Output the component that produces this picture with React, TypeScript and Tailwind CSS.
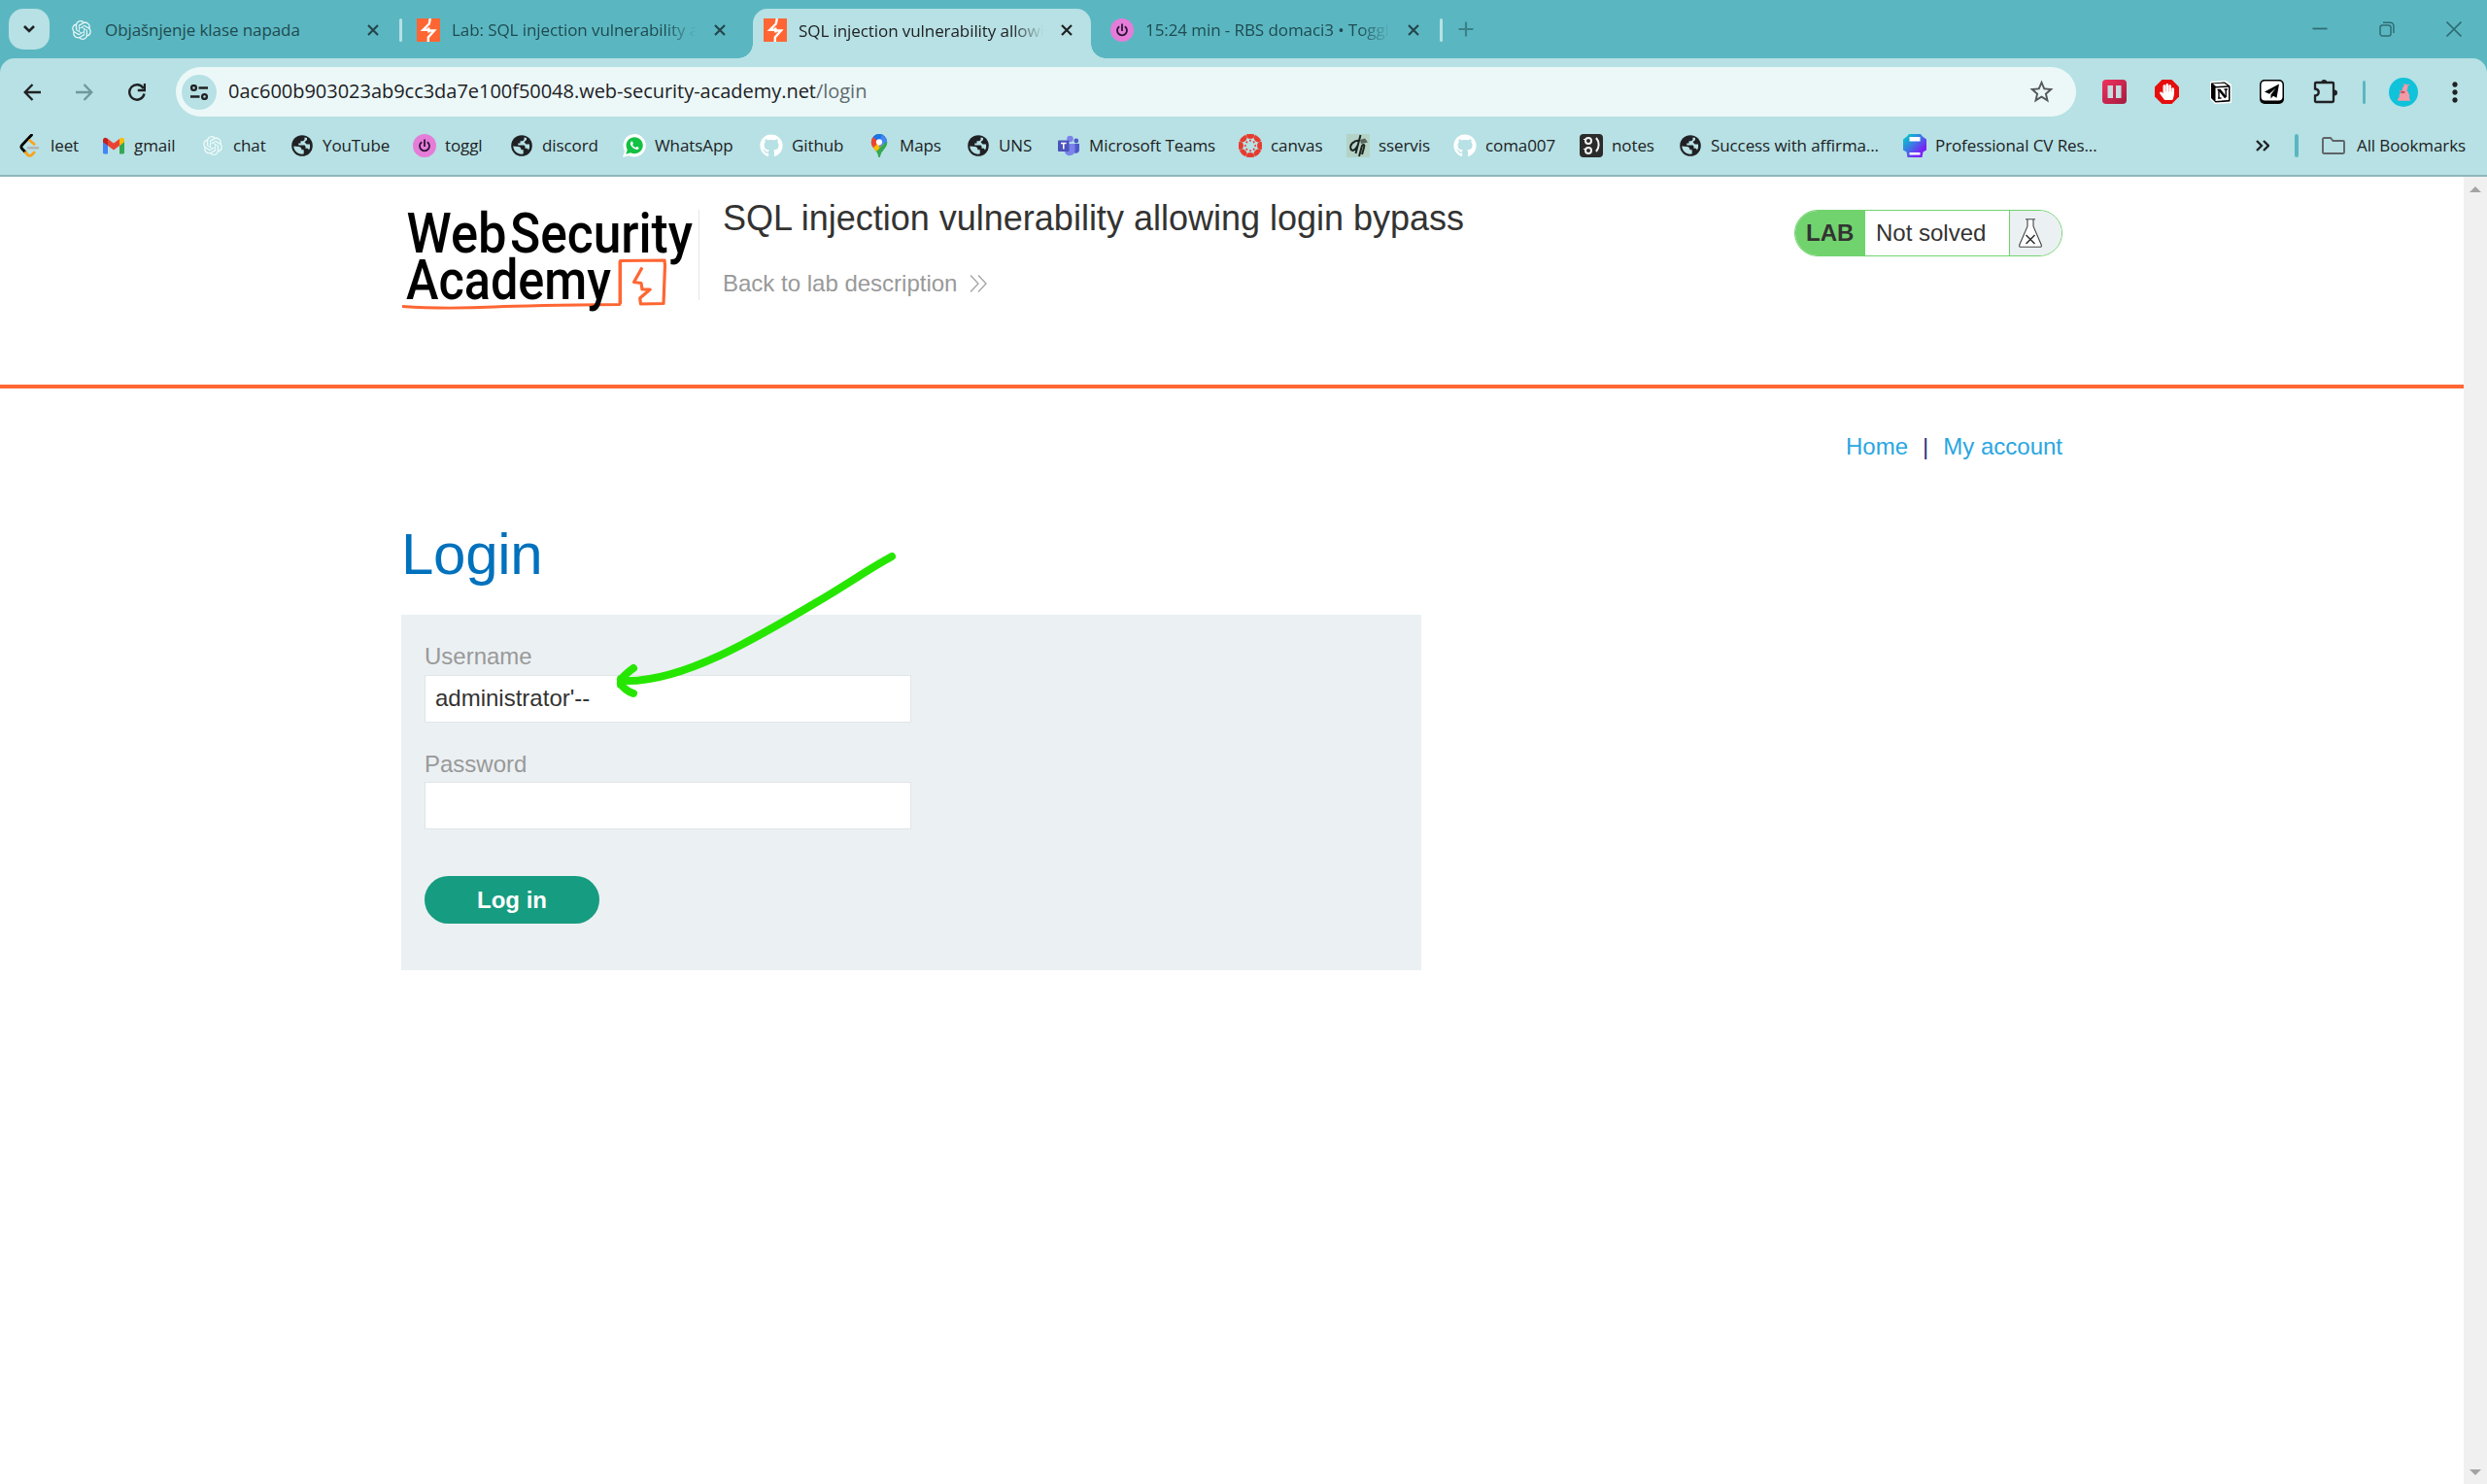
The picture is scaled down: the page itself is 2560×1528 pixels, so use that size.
import type { ReactNode } from "react";
import { MdStarBorder, MdMoreVert } from "react-icons/md";
import { RiOpenaiFill } from "react-icons/ri";
import { FaGithub, FaHandPaper } from "react-icons/fa";
import { IoLogoWhatsapp } from "react-icons/io";

const BurpIcon = () => (
  <svg viewBox="0 0 24 24" className="size-6 shrink-0">
    <rect width="24" height="24" fill="#ff6633" />
    <path d="M13.800 0 12.800 5.500 6.500 11.800H12.300V14.500M12.300 9.500V12.500H18L11.800 19.500V24" fill="none" stroke="#fff" strokeWidth="2.400" />
  </svg>
);

const TogglIcon = () => (
  <svg viewBox="0 0 24 24" className="size-6 shrink-0">
    <circle cx="12" cy="12" r="12" fill="#e57cd8" />
    <path d="M12 5.500v7.500M9.200 8.200a5 5 0 1 0 5.600 0" fill="none" stroke="#2c1338" strokeWidth="1.800" />
  </svg>
);

const LeetIcon = () => (
  <svg viewBox="0 0 24 24" className="size-6">
    <path d="M13.500 1 3.800 11.200c-1.200 1.300-1.200 2.700 0 4L7 18.500" fill="none" stroke="#000" strokeWidth="2.800" strokeLinecap="round" />
    <path d="m7.300 19 2.300 2.500c1.200 1.200 2.900 1.200 4.100 0l2.500-2.500M11.500 6.500l4.800 4" fill="none" stroke="#ffa116" strokeWidth="2.600" strokeLinecap="round" />
    <path d="M10 14.200h10" stroke="#b3b3b3" strokeWidth="2.400" strokeLinecap="round" />
  </svg>
);

const GmailIcon = () => (
  <svg viewBox="0 0 24 24" className="size-6">
    <path d="M1 5.500V19.300c0 .7.500 1.200 1.200 1.200H6V11.500Z" fill="#4285f4" />
    <path d="M23 5.500V19.300c0 .7-.5 1.200-1.200 1.200H18V11.500Z" fill="#34a853" />
    <path d="M18 5v7l5-3.800V6.300c0-2.400-2.300-3.300-4-2Z" fill="#fbbc04" />
    <path d="M6 12V5l6 4.500L18 5v7l-6 4.500Z" fill="#ea4335" />
    <path d="M1 6.300v1.900L6 12V5l-1-.7C3.300 3 1 3.900 1 6.300Z" fill="#c5221f" />
  </svg>
);

const MapsIcon = () => (
  <svg viewBox="0 0 24 24" className="size-6">
    <defs>
      <clipPath id="pin">
        <path d="M12 0a8.200 8.200 0 0 0-8.200 8.300c0 2.800 1.100 4.500 3 6.900 2.200 2.800 3.600 4.300 4.200 7.500.2 1.700 1.800 1.700 2 0 .6-3.200 2-4.700 4.200-7.500 1.900-2.400 3-4.100 3-6.900A8.200 8.200 0 0 0 12 0Z" />
      </clipPath>
    </defs>
    <g clipPath="url(#pin)">
      <path d="M0 0h24v24H0Z" fill="#34a853" />
      <path d="M0 6 12 8.300 17 10 7 20H0Z" fill="#fbbc04" />
      <path d="M0 0h6L12 8.300 5.500 14.500 0 9Z" fill="#ea4335" />
      <path d="M5 2.500 8 0h12l-8 8.300Z" fill="#1a73e8" />
      <path d="M15 0 22 6 12 14V8.300Z" fill="#4285f4" />
      <path d="M22 6.500 12 16v8h12Z" fill="#34a853" />
    </g>
    <circle cx="12" cy="8.300" r="3.100" fill="#fff" />
  </svg>
);

const TeamsIcon = () => (
  <svg viewBox="0 0 24 24" className="size-6">
    <circle cx="19.800" cy="7" r="2.400" fill="#5059c9" />
    <path d="M16 10h7v6.500a3.500 3.500 0 0 1-5 3Z" fill="#5059c9" />
    <circle cx="13.500" cy="5" r="3.300" fill="#7b83eb" />
    <path d="M8 10h10.500v7a5.400 5.400 0 0 1-10.500 1.500Z" fill="#7b83eb" />
    <rect x="1" y="6.500" width="11.500" height="11.500" rx="1" fill="#4b53bc" />
    <path d="M4 9.500h5.600M6.800 9.500v6" stroke="#fff" strokeWidth="1.500" />
  </svg>
);

const CanvasIcon = () => (
  <svg viewBox="0 0 24 24" className="size-6" fill="#e63b2e">
    {[0, 45, 90, 135, 180, 225, 270, 315].map((a) => (
      <g key={a} transform={`rotate(${a} 12 12)`}>
        <path d="M8 .7a12 12 0 0 1 8 0 4 4 0 0 1-8 0Z" stroke="#e63b2e" strokeWidth="0.600" />
        <circle cx="12" cy="6.800" r="1" />
      </g>
    ))}
  </svg>
);

const ServisIcon = () => (
  <svg viewBox="0 0 24 24" className="size-6">
    <rect width="24" height="24" fill="#b4d3c6" />
    <path d="M13 6.500C7 7 3 11 4.500 15.500c1.500 3 5 1 7.500-4.500M9.500 20 14.500 1M13 23l3-11c2-2 3-1 2 2l-2 7" fill="none" stroke="#1c241f" strokeWidth="2" />
    <path d="m14 6 5-1.500 3 4-7 1.500Z" fill="#59635d" />
  </svg>
);

const NotesIcon = () => (
  <svg viewBox="0 0 24 24" className="size-6">
    <rect width="24" height="24" rx="4" fill="#2b2b2b" />
    <g fill="none" stroke="#f3f3f3" strokeWidth="2">
      <circle cx="9" cy="7" r="3" />
      <circle cx="9" cy="17" r="3" />
      <path d="M17 4c3.500 4 3.500 10 0 14" />
      <path d="M4 5.500h3M4 15.500h3" strokeWidth="1.200" />
    </g>
  </svg>
);

const CvIcon = () => (
  <svg viewBox="0 0 24 24" className="size-6">
    <defs>
      <linearGradient id="cv" x1="0" y1="0" x2="1" y2="1">
        <stop offset="0.100" stopColor="#05c3c9" />
        <stop offset="0.450" stopColor="#3f74e6" />
        <stop offset="0.750" stopColor="#7a22f5" />
      </linearGradient>
    </defs>
    <path d="M6 0h12l2 2.500 4 3v11l-3.500 2-1 5.500H4.500l-1-5.500-3.500-2v-11l4-3Z" fill="url(#cv)" />
    <rect x="6.500" y="3" width="11" height="4.500" fill="#fff" />
    <rect x="6.500" y="19" width="11" height="2.500" fill="#fff" />
  </svg>
);

const WhatsIcon = () => (
  <svg viewBox="0 0 24 24" className="size-6">
    <path d="M12.200 0A11.800 11.800 0 0 0 2 17.700L0 24l6.400-1.800A11.800 11.800 0 1 0 12.200 0Z" fill="#fff" />
    <IoLogoWhatsapp x="2" y="2" size={20} color="#13c143" />
  </svg>
);

const Globe = () => (
  <svg viewBox="0 0 24 24" className="size-6 shrink-0">
    <circle cx="12" cy="12" r="10.800" fill="#202124" />
    <path d="M3.300 12.500 8.500 13c1.800.2 3 1.500 3 3.200h2.200v4.300C8 21.500 3.500 17.500 3.300 12.500Z" fill="#b7e1e4" />
    <path d="M14.500 3.500v1.800c0 1-.8 1.900-2 1.900H10.500v2.200H8.300v2.200h5.500c1 0 1.700.7 1.700 1.700v1.500h2.200l1.300 1.800a8.600 8.600 0 0 0 1-6.100h-3.500l-2-2.200 2.500-2.300V3.900a8.400 8.400 0 0 0-2.500-.4Z" fill="#b7e1e4" />
  </svg>
);
const Gpt = () => <RiOpenaiFill className="size-6 text-[#eefafa]" />;
const Git = () => <FaGithub className="size-6 text-white" />;

const bookmarks: { w: string; icon: ReactNode; label: string }[] = [
  { w: "w-[86px]", icon: <LeetIcon />, label: "leet" },
  { w: "w-[102px]", icon: <GmailIcon />, label: "gmail" },
  { w: "w-[92px]", icon: <Gpt />, label: "chat" },
  { w: "w-[126px]", icon: <Globe />, label: "YouTube" },
  { w: "w-[100px]", icon: <TogglIcon />, label: "toggl" },
  { w: "w-[116px]", icon: <Globe />, label: "discord" },
  { w: "w-[141px]", icon: <WhatsIcon />, label: "WhatsApp" },
  { w: "w-[111px]", icon: <Git />, label: "Github" },
  { w: "w-[102px]", icon: <MapsIcon />, label: "Maps" },
  { w: "w-[93px]", icon: <Globe />, label: "UNS" },
  { w: "w-[187px]", icon: <TeamsIcon />, label: "Microsoft Teams" },
  { w: "w-[111px]", icon: <CanvasIcon />, label: "canvas" },
  { w: "w-[110px]", icon: <ServisIcon />, label: "sservis" },
  { w: "w-[130px]", icon: <Git />, label: "coma007" },
  { w: "w-[102px]", icon: <NotesIcon />, label: "notes" },
  { w: "w-[231px]", icon: <Globe />, label: "Success with affirma..." },
  { w: "w-[220px]", icon: <CvIcon />, label: "Professional CV Res..." },
];

const Cross = ({ c = "#24464b" }: { c?: string }) => (
  <svg viewBox="0 0 12 12" className="size-3 shrink-0">
    <path d="m1 1 10 10M11 1 1 11" stroke={c} strokeWidth="2.200" />
  </svg>
);

const Fade = ({ children, className }: { children: ReactNode; className: string }) => (
  <span className={`block overflow-hidden whitespace-nowrap pt-px ${className}`}>{children}</span>
);

const mask = "[mask-image:linear-gradient(to_right,#000_calc(100%-32px),transparent)]";

function TabStrip() {
  return (
    <div className="flex h-[60px] shrink-0 bg-[#5ab7c1] text-[17px] leading-6 tracking-[-0.08px] text-[#1f4a50]">
      <div className="ml-[9px] mt-[9px] flex size-[42px] items-center justify-center rounded-[15px] bg-[#b7e1e4]">
        <svg viewBox="0 0 14 10" className="h-[10px] w-[14px]">
          <path d="m2 2 5 5 5-5" fill="none" stroke="#202124" strokeWidth="2.600" />
        </svg>
      </div>
      <div className="flex h-[61px] w-[360px] items-center pl-[21px]">
        <RiOpenaiFill className="size-6 text-[#e4f6f7]" />
        <Fade className="ml-3 w-[270px]">Objašnjenje klase napada</Fade>
        <Cross />
      </div>
      <div className="mt-[19px] h-6 w-[3px] rounded-full bg-[#b7e1e4]" />
      <div className="flex h-[61px] w-[346px] items-center pl-[15px]">
        <BurpIcon />
        <Fade className={`ml-3 mr-[18px] w-[252px] ${mask}`}>Lab: SQL injection vulnerability allowing</Fade>
        <Cross />
      </div>
      <div className="flex w-[378px] items-end">
        <div className="size-[15px] bg-[radial-gradient(circle_at_0_0,transparent_14.500px,#b7e1e4_15px)]" />
        <div className="flex h-[51px] w-[348px] items-center rounded-t-[15px] bg-[#b7e1e4] pb-[7px] pl-[11px] text-[#202124]">
          <BurpIcon />
          <Fade className={`ml-3 mr-[18px] w-[252px] ${mask}`}>SQL injection vulnerability allowing</Fade>
          <Cross c="#202124" />
        </div>
        <div className="size-[15px] bg-[radial-gradient(circle_at_100%_0,transparent_14.500px,#b7e1e4_15px)]" />
      </div>
      <div className="flex h-[61px] w-[344px] items-center pl-[5px]">
        <TogglIcon />
        <Fade className={`ml-3 mr-[18px] w-[252px] ${mask}`}>15:24 min - RBS domaci3 • Toggl Track</Fade>
        <Cross />
      </div>
      <div className="mt-[19px] h-6 w-[3px] rounded-full bg-[#b7e1e4]" />
      <svg viewBox="0 0 16 16" className="ml-4 mt-[22px] size-4">
        <path d="M8 .5v15M.5 8h15" stroke="#3b8188" strokeWidth="2.200" />
      </svg>
      <div className="ml-auto mr-[26px] flex h-[60px] items-center text-[#2f6d74]">
        <svg viewBox="0 0 16 16" className="size-4">
          <path d="M.5 7.500h15" stroke="currentColor" strokeWidth="1.800" />
        </svg>
        <svg viewBox="0 0 16 16" className="ml-[53px] size-4" fill="none" stroke="currentColor" strokeWidth="1.500">
          <rect x="1" y="4" width="11" height="11" rx="2.300" />
          <path d="M4 1.200h7.500a3.400 3.400 0 0 1 3.400 3.400V12" />
        </svg>
        <svg viewBox="0 0 16 16" className="ml-[53px] size-4">
          <path d="m.5.5 15 15M15.500.5l-15 15" stroke="currentColor" strokeWidth="1.600" />
        </svg>
      </div>
    </div>
  );
}

function Toolbar() {
  return (
    <div className="flex h-[69px] items-center">
      <svg viewBox="0 0 18 18" className="ml-6 size-[18px]" fill="none" stroke="#202124" strokeWidth="2.300">
        <path d="M18 9H2M9.500 1 1.700 9l7.800 8" />
      </svg>
      <svg viewBox="0 0 18 18" className="ml-9 size-[18px]" fill="none" stroke="#6f979b" strokeWidth="2.300">
        <path d="M0 9h16M8.500 1l7.800 8-7.800 8" />
      </svg>
      <svg viewBox="0 0 18 18" className="ml-9 size-[18px]" fill="none" stroke="#202124" strokeWidth="2.400">
        <path d="M15.700 5.200A7.700 7.700 0 1 0 16.500 10.500" />
        <path d="M17 0v7h-7.200" />
      </svg>
      <div className="ml-[31px] flex h-[51px] w-[1956px] items-center rounded-full bg-[#ecf8f8] pl-1.5 pr-[21px]">
        <div className="flex size-9 items-center justify-center rounded-full bg-[#b7e1e4]">
          <svg viewBox="0 0 20 16" className="h-4 w-5" fill="none" stroke="#202124" strokeWidth="2.300">
            <circle cx="4.500" cy="3.500" r="2.400" />
            <path d="M9.500 3.500H19M1 12.500h9.500" />
            <circle cx="15.500" cy="12.500" r="2.400" />
          </svg>
        </div>
        <span className="ml-3 pb-px text-[20px] leading-6 tracking-[-0.03px] text-[#202124]">
          0ac600b903023ab9cc3da7e100f50048.web-security-academy.net<span className="text-[#5f6b6d]">/login</span>
        </span>
        <MdStarBorder className="ml-auto size-[29px] text-[#55595b]" />
      </div>
      <svg viewBox="0 0 25 25" className="ml-[27px] size-[25px]">
        <defs>
          <linearGradient id="pk" x1="0" y1="0" x2="1" y2="1">
            <stop stopColor="#f0325f" />
            <stop offset="1" stopColor="#a31b40" />
          </linearGradient>
        </defs>
        <rect width="25" height="25" rx="4" fill="url(#pk)" />
        <path d="M5.500 6H11v13H5.500ZM14 6h5.500v13H14Z" fill="#c3dde0" />
      </svg>
      <div className="ml-[29px] flex size-[25px] items-center justify-center bg-[#e60d0d] [clip-path:polygon(30%_0,70%_0,100%_30%,100%_70%,70%_100%,30%_100%,0_70%,0_30%)]">
        <FaHandPaper className="size-[17px] text-white" />
      </div>
      <svg viewBox="0 0 24 24" className="ml-[31px] size-6">
        <path d="M1 1 17 0l6 4v19L6 24l-5-5Z" fill="#fff" />
        <path d="M2 2.500 16 1.500l5.500 4v16L6.500 22.500 2 18Z" fill="#000" />
        <path d="M4 3.300 15.500 2.700l3.500 2.500L7 6ZM6.500 7.500l13.500-.8V20l-13.500 1Z" fill="#fff" />
        <path d="M8.500 9.500h3M15.500 9h3.500M9 18h3.500M10 9.500V18M17.200 9v8" stroke="#000" strokeWidth="1.400" />
        <path d="m10.500 9.500 6.500 8" stroke="#000" strokeWidth="2.600" />
      </svg>
      <svg viewBox="0 0 25 25" className="ml-[28px] size-[25px]">
        <rect width="25" height="25" rx="5" fill="#000" />
        <rect x="1.500" y="1.500" width="22" height="20" rx="4" fill="#fff" />
        <path d="M20 4.500 5 12.500l5 2.200 6.500-6-5 6.800v4l2.500-2.800 3.500 2Z" fill="#000" />
      </svg>
      <svg viewBox="0 0 25 25" className="ml-[30px] size-[25px]" fill="none" stroke="#202124" strokeWidth="2.300">
        <path d="M3.500 4H20c.6 0 1 .4 1 1v18c0 .6-.4 1-1 1H3c-.6 0-1-.4-1-1v-5.500c5-.5 5-6.500 0-7V5c0-.6.400-1 1-1Z" transform="translate(0 -1)" />
        <path d="M8.300 3a3 3 0 0 1 6 0ZM22 10.500a3 3 0 0 1 0 6Z" fill="#202124" stroke="none" />
      </svg>
      <div className="ml-[26px] h-6 w-[3px] rounded-full bg-[#5ab7c1]" />
      <svg viewBox="0 0 30 30" className="ml-[24px] size-[30px]">
        <circle cx="15" cy="15" r="15" fill="#10c2da" />
        <path d="M14 12.500c-.5-2.500 1-4 2.500-4.500L14 6.800c2.500-.4 4-.2 5.500.4l3-.9-3.300 2.700c.8 1.700 0 3.200-1 4 2.300 2 3.500 5 2.800 8l1.200 2.700H10c-2-.7-.5-2.700.8-3.500-.6-2.200.3-4 1.700-5l-2.200-1.500Z" fill="#f59aa4" />
        <path d="m11.500 13.500 4.500.5 1 1.600-3.500.7" fill="#c64a5e" />
      </svg>
      <MdMoreVert className="ml-[22px] size-8 text-[#202124]" />
    </div>
  );
}

function BookmarkBar() {
  return (
    <div className="flex h-[42px] items-center pl-[19px] text-[17px] leading-6 tracking-[-0.1px] text-[#202124]">
      {bookmarks.map((b, i) => (
        <div key={i} className={`flex shrink-0 items-center gap-[9px] whitespace-nowrap ${b.w}`}>
          {b.icon}
          <span>{b.label}</span>
        </div>
      ))}
      <svg viewBox="0 0 14 12" className="ml-[143px] h-3 w-[14px]" fill="none" stroke="#202124" strokeWidth="2.300">
        <path d="m1 1 5 5-5 5M8 1l5 5-5 5" />
      </svg>
      <div className="ml-[26px] h-6 w-1 rounded-full bg-[#5ab7c1]" />
      <svg viewBox="0 0 24 18" className="ml-6 h-[18px] w-6" fill="none" stroke="#5f6368" strokeWidth="1.900">
        <path d="M1 2.200C1 1.500 1.500 1 2.200 1H9l2.500 3h10.300c.7 0 1.200.5 1.200 1.200v10.600c0 .7-.5 1.200-1.200 1.200H2.200C1.500 17 1 16.500 1 15.800Z" />
      </svg>
      <span className="ml-3 whitespace-nowrap">All Bookmarks</span>
    </div>
  );
}

const Logo = () => (
  <svg viewBox="0 0 325 120" className="h-[120px] w-[325px]">
    <path d="M9 110.500c30 2 60 2 95 .5s80-2 129-2.500V64" fill="none" stroke="#ff6633" strokeWidth="2.800" strokeLinejoin="round" />
    <path d="M233.500 108V63.500l45.500-.5.500 5-1.500 39.500-23.500.5-.8-6 10.500-9H256l-1-6.500-7.500-1 8.500-15" fill="none" stroke="#ff6633" strokeWidth="3.200" strokeLinejoin="round" />
    <g fontFamily="Roboto, sans-serif" fontWeight="500" fontSize="57" fill="#000">
      <text x="13.500" y="54.500" textLength="103" lengthAdjust="spacingAndGlyphs">Web</text>
      <text x="120" y="54.500" textLength="188" lengthAdjust="spacingAndGlyphs">Security</text>
      <text x="13" y="102.500" textLength="211" lengthAdjust="spacingAndGlyphs">Academy</text>
    </g>
  </svg>
);

function LabHeader() {
  return (
    <header className="flex h-[218px] shrink-0 border-b-4 border-[#ff6633] pl-[405px]">
      <div className="pt-[23px]">
        <Logo />
      </div>
      <div className="-ml-[11px] mt-[34px] h-[93px] w-px bg-[#e3e6e8]" />
      <div className="ml-6 pt-[23px]">
        <h2 className="text-[36px] leading-10 text-[#333332]">SQL injection vulnerability allowing login bypass</h2>
        <a className="mt-[31px] flex items-center text-[24px] leading-8 text-[#999]">
          Back to lab description
          <svg viewBox="0 0 18 18" className="ml-[13px] size-[18px]" fill="none" stroke="#a3a3a3" strokeWidth="1.300">
            <path d="m1 .5 8 8.500-8 8.500M9 .5l8 8.500-8 8.500" />
          </svg>
        </a>
      </div>
      <div className="ml-auto mr-[413px] mt-[34px] flex h-12 w-[276px] overflow-hidden rounded-full border border-[#71d36e] text-[24px] leading-[46px] text-[#333332]">
        <div className="w-[72px] bg-[#71d36e] pl-[11px] font-bold">LAB</div>
        <div className="w-[149px] border-r border-[#71d36e] pl-[11px]">Not solved</div>
        <div className="flex-1 bg-[#ebf0f3] pl-[9px] pt-2">
          <svg viewBox="0 0 24 30" className="h-[30px] w-6" fill="#fff" stroke="#444" strokeWidth="1.100">
            <path d="M9 1v7L.8 27c-.5 1.500 0 2.300 1.200 2.300h20c1.200 0 1.700-.8 1.200-2.300L15 8V1" />
            <path d="M7 .8h10" />
            <path d="m7.500 17 9 9M16.500 17l-9 9" stroke="#333" strokeWidth="1.600" />
          </svg>
        </div>
      </div>
    </header>
  );
}

function LoginPage() {
  return (
    <main className="flex flex-col pl-[413px] pr-[413px] text-[24px]">
      <nav className="mt-11 flex h-8 justify-end leading-8 text-[#29a6e1]">
        <a>Home</a>
        <span className="mx-[15px] text-[#33337f]">|</span>
        <a>My account</a>
      </nav>
      <h1 className="mt-[59px] h-[70px] text-[60px] leading-[72px] tracking-[-0.3px] text-[#0071bd]">Login</h1>
      <form className="mt-[28px] h-[366px] w-[1050px] bg-[#ebf0f3] pl-6 pt-[27px]">
        <label className="block h-[35px] leading-8 text-[#999]">Username</label>
        <div className="relative">
          <input
            readOnly
            value="administrator'--"
            className="block h-[49px] w-[501px] border border-[#e0e5e8] bg-white px-[10px] pb-[1px] text-[#333332]"
          />
          <svg viewBox="0 0 300 160" className="absolute left-[193px] top-[-133px] h-40 w-[300px]" fill="none" stroke="#26e600" strokeWidth="8" strokeLinecap="round" strokeLinejoin="round">
            <path d="M288 11C262 25 245 38 209 59 150 94 75 139 16 139" />
            <path d="M22 126C15 131 12 134 9 138M9 142C12 147 16 150 22 152M9 137v6" />
          </svg>
        </div>
        <label className="mt-[27px] block h-[34px] leading-8 text-[#999]">Password</label>
        <input readOnly className="block h-[49px] w-[501px] border border-[#e0e5e8] bg-white px-[9px]" />
        <button type="button" className="mt-12 block h-[49px] w-[180px] rounded-full bg-[#169c80] font-bold text-white">
          Log in
        </button>
      </form>
    </main>
  );
}

export default function App() {
  return (
    <div className="flex h-[1528px] w-[2560px] flex-col overflow-hidden bg-white font-['Liberation_Sans',Arial,sans-serif]">
      <div className="flex shrink-0 flex-col bg-[#5ab7c1] font-['Open_Sans','Noto_Sans',sans-serif]">
        <TabStrip />
        <div className="h-[122px] rounded-t-[15px] border-b-2 border-[#8fb6ba] bg-[#b7e1e4]">
          <Toolbar />
          <BookmarkBar />
        </div>
      </div>
      <div className="flex flex-1">
        <div className="flex w-[2536px] flex-col">
          <LabHeader />
          <LoginPage />
        </div>
        <div className="flex w-6 flex-col items-center justify-between bg-[#f0f0f0] pb-[9px] pt-[10px]">
          <svg viewBox="0 0 12 6" className="h-1.5 w-3">
            <path d="M0 6 6 0l6 6Z" fill="#a3a3a3" />
          </svg>
          <svg viewBox="0 0 12 6" className="h-1.5 w-3">
            <path d="m0 0 6 6 6-6Z" fill="#a3a3a3" />
          </svg>
        </div>
      </div>
    </div>
  );
}
